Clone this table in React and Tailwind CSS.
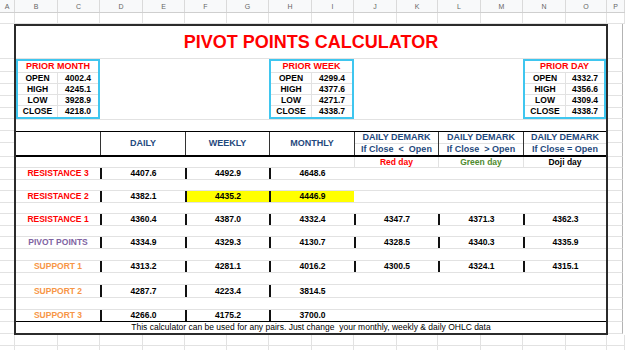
const LETTERS = 'ABCDEFGHIJKLMNOP'.split('');
const SHEET_COLS =
  'grid grid-cols-[15px_43px_42px_43px_42px_42px_42px_43px_42px_43px_41px_43px_42px_43px_41px_18px]';
const PAIRS = 'grid grid-cols-[84px_85px_84px_85px_84px_85px_83px]';
const GRID = 'border-[#e2e2e2]';

// heights of sheet rows beside the frame (col A / col P)
const SIDE_ROWS = [
  'h-[35px]', 'h-[13px]', 'h-[12px]', 'h-[12px]', 'h-[12px]', 'h-[11px]', 'h-[12px]', 'h-[12px]',
  'h-[14px]', 'h-[11px]', 'h-[12px]', 'h-[11px]', 'h-[12px]', 'h-[11px]', 'h-[12px]', 'h-[11px]',
  'h-[12px]', 'h-[12px]', 'h-[12px]', 'h-[12px]', 'h-[13px]', 'h-[12px]', 'h-[12px]', 'h-[12px]',
];

function GridRow({ h }) {
  return (
    <div className={`${SHEET_COLS} ${h}`}>
      {LETTERS.map((l) => (
        <div key={l} className={`border-r border-b ${GRID}`} />
      ))}
    </div>
  );
}

function SideCol({ width, line }) {
  return (
    <div className={`flex flex-col ${width}`}>
      {SIDE_ROWS.map((h, i) => (
        <div key={i} className={`${h} border-b ${GRID} ${line ? 'border-r border-r-[#b3b3b3]' : ''}`} />
      ))}
    </div>
  );
}

function PriorBox({ title, rows, keyW }) {
  return (
    <div className="flex flex-col border-2 border-[#3fc6ef]">
      <div className="flex h-[12px] items-center justify-center border-b border-[#e2e2e2] text-[9px] font-bold text-[#ff0000]">
        {title}
      </div>
      {rows.map(([k, v], i) => (
        <div key={k} className={`flex h-[11px] ${i < 3 ? 'border-b border-[#e2e2e2]' : ''}`}>
          <div className={`flex ${keyW} items-center justify-center border-r border-[#e2e2e2]`}>{k}</div>
          <div className="flex flex-1 items-center justify-center">{v}</div>
        </div>
      ))}
    </div>
  );
}

function HeadCell({ children }) {
  return <div className="flex items-center justify-center border-l border-[#333]">{children}</div>;
}

function DemarkHead({ rule }) {
  return (
    <div className="flex flex-col border-l border-[#333]">
      <div className="flex flex-1 items-center justify-center border-b border-[#e2e2e2]">DAILY DEMARK</div>
      <div className="flex flex-1 items-center justify-center whitespace-pre">{rule}</div>
    </div>
  );
}

function Gap({ h }) {
  return <div className={`${h} border-b ${GRID}`} />;
}

function DataRow({ label, color, vals, h, yellow, last }) {
  return (
    <div className={`${PAIRS} ${h} ${last ? 'border-b border-black' : `border-b ${GRID}`}`}>
      <div className={`flex items-center justify-center ${color}`}>{label}</div>
      {[0, 1, 2, 3, 4, 5].map((i) =>
        vals[i] ? (
          <div
            key={i}
            className={`flex items-center justify-center border-l-2 border-[#111] ${
              yellow && (i === 1 || i === 2) ? 'bg-[#ffff00]' : ''
            }`}
          >
            {vals[i]}
          </div>
        ) : (
          <div key={i} />
        )
      )}
    </div>
  );
}

export default function App() {
  return (
    <div className="h-[350px] w-[625px] overflow-hidden bg-white font-['Liberation_Sans',Arial,sans-serif] text-[8.5px] font-bold leading-none text-black">
      {/* column letters */}
      <div className={`${SHEET_COLS} h-[13px] border-b border-[#cfcfcf] bg-[#f8f9fa]`}>
        {LETTERS.map((l) => (
          <div key={l} className="flex items-center justify-center border-r border-[#dadada] text-[7px] font-normal text-[#666]">
            {l}
          </div>
        ))}
      </div>
      <GridRow h="h-[11px]" />

      <div className="flex">
        <SideCol width="w-[14px]" />

        {/* framed calculator */}
        <div className="flex w-[594px] flex-col border-2 border-[#2b2b2b]">
          <div className={`flex h-[33px] items-center justify-center border-b ${GRID} text-[18px] text-[#ff0000]`}>
            PIVOT POINTS CALCULATOR
          </div>

          <div className={`${PAIRS} h-[60px]`}>
            <PriorBox
              title="PRIOR MONTH"
              keyW="w-[40px]"
              rows={[['OPEN', '4002.4'], ['HIGH', '4245.1'], ['LOW', '3928.9'], ['CLOSE', '4218.0']]}
            />
            <div />
            <div />
            <PriorBox
              title="PRIOR WEEK"
              keyW="w-[41px]"
              rows={[['OPEN', '4299.4'], ['HIGH', '4377.6'], ['LOW', '4271.7'], ['CLOSE', '4338.7']]}
            />
            <div />
            <div />
            <PriorBox
              title="PRIOR DAY"
              keyW="w-[41px]"
              rows={[['OPEN', '4332.7'], ['HIGH', '4356.6'], ['LOW', '4309.4'], ['CLOSE', '4338.7']]}
            />
          </div>

          <div className={`h-[12px] border-t ${GRID}`} />

          {/* column titles */}
          <div className={`${PAIRS} h-[26px] border-t border-b-2 border-black text-[9px] text-[#1f497d]`}>
            <div />
            <HeadCell>DAILY</HeadCell>
            <HeadCell>WEEKLY</HeadCell>
            <HeadCell>MONTHLY</HeadCell>
            <DemarkHead rule="If Close  <  Open" />
            <DemarkHead rule="If Close  > Open" />
            <DemarkHead rule="If Close = Open" />
          </div>

          <div className={`${PAIRS} h-[11px] border-b ${GRID}`}>
            <div />
            <div />
            <div />
            <div />
            <div className={`flex items-center justify-center border-l ${GRID} text-[#ff0000]`}>Red day</div>
            <div className={`flex items-center justify-center border-l ${GRID} text-[#4f8b2e]`}>Green day</div>
            <div className={`flex items-center justify-center border-l ${GRID}`}>Doji day</div>
          </div>

          <DataRow h="h-[12px]" label="RESISTANCE 3" color="text-[#ff0000]" vals={['4407.6', '4492.9', '4648.6']} />
          <Gap h="h-[11px]" />
          <DataRow h="h-[12px]" label="RESISTANCE 2" color="text-[#ff0000]" vals={['4382.1', '4435.2', '4446.9']} yellow />
          <Gap h="h-[11px]" />
          <DataRow
            h="h-[12px]"
            label="RESISTANCE 1"
            color="text-[#ff0000]"
            vals={['4360.4', '4387.0', '4332.4', '4347.7', '4371.3', '4362.3']}
          />
          <Gap h="h-[11px]" />
          <DataRow
            h="h-[12px]"
            label="PIVOT POINTS"
            color="text-[#8064a2]"
            vals={['4334.9', '4329.3', '4130.7', '4328.5', '4340.3', '4335.9']}
          />
          <Gap h="h-[12px]" />
          <DataRow
            h="h-[12px]"
            label="SUPPORT 1"
            color="text-[#f79646]"
            vals={['4313.2', '4281.1', '4016.2', '4300.5', '4324.1', '4315.1']}
          />
          <Gap h="h-[12px]" />
          <DataRow h="h-[13px]" label="SUPPORT 2" color="text-[#f79646]" vals={['4287.7', '4223.4', '3814.5']} />
          <Gap h="h-[12px]" />
          <DataRow h="h-[12px]" label="SUPPORT 3" color="text-[#f79646]" vals={['4266.0', '4175.2', '3700.0']} last />

          <div className="flex h-[11px] items-center justify-center whitespace-pre font-normal">
            This calculator can be used for any pairs. Just change  your monthly, weekly &amp; daily OHLC data
          </div>
        </div>

        <SideCol width="w-[15px]" line />
      </div>

      <GridRow h="h-[11px]" />
      <GridRow h="h-[12px]" />
    </div>
  );
}
